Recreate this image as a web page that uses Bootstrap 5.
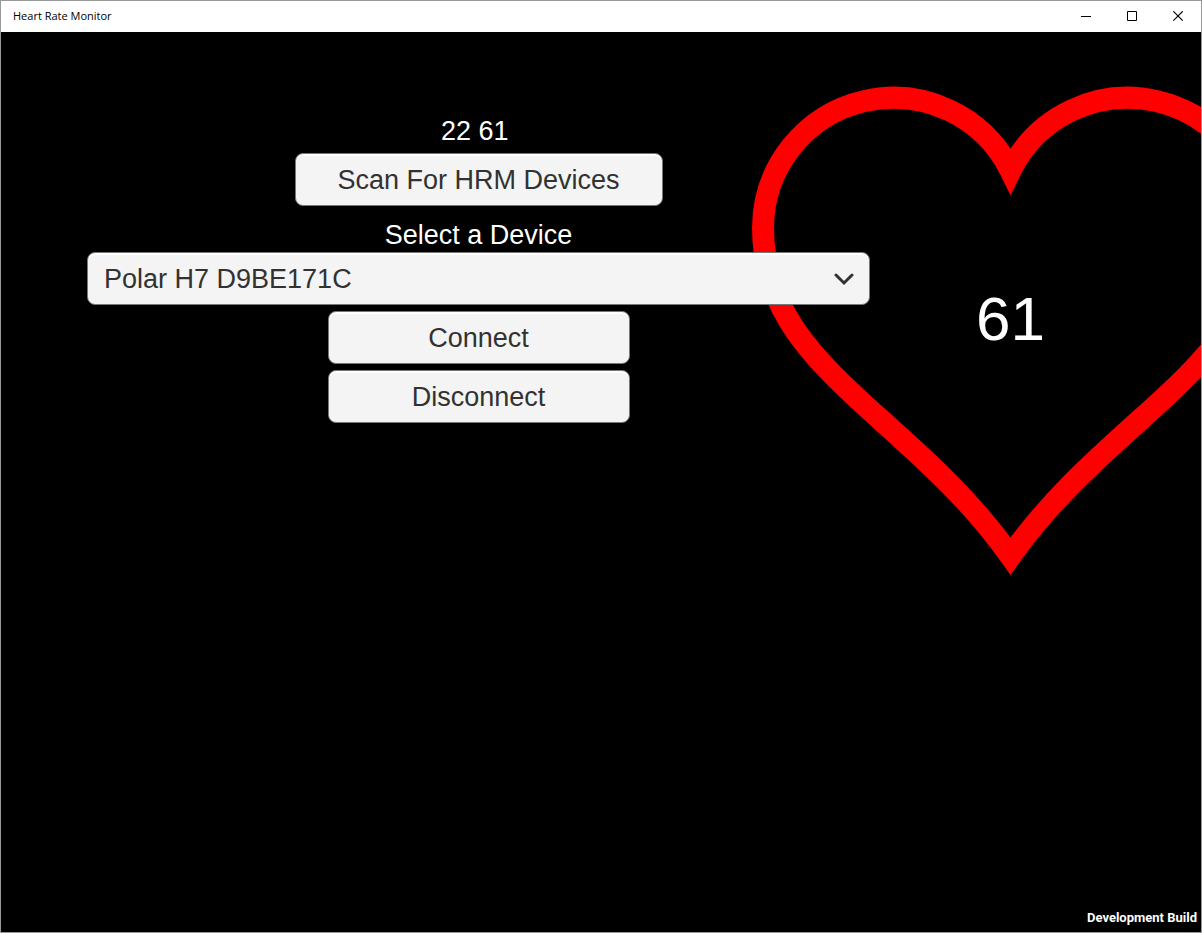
<!DOCTYPE html>
<html lang="en">
<head>
<meta charset="utf-8">
<meta name="viewport" content="width=device-width, initial-scale=1">
<title>Heart Rate Monitor</title>
<link href="https://cdn.jsdelivr.net/npm/bootstrap@5.3.0/dist/css/bootstrap.min.css" rel="stylesheet">
<style>
  body { font-family: "Liberation Sans", Arial, sans-serif; background: #000; }
  .app-window { border: 1px solid #999; }
  .title-bar { height: 31px; padding-left: 12px; }
  .title-bar h1 { font-size: 11px; line-height: 30px; font-family: "Open Sans", sans-serif; }
  .caption-btn { width: 46px; color: #000; }
  .caption-btn svg { display: block; }
  .stage { padding: 84px 331px 0 86px; font-size: 27px; line-height: 30px; }
  .controls { z-index: 1; }
  .status-line { margin-bottom: 7px; }
  .device-label { margin: 14px 0 2px; }
  .unity-control { height: 53px; border: 1px solid #777; border-radius: 8px; background-color: #f4f4f4; color: #323232; font-size: 27px; line-height: 30px; box-shadow: inset 0 2px 0 #fff; }
  .unity-control:hover, .unity-control:focus { background-color: #fff; color: #323232; border-color: #777; }
  .btn-scan { width: 368px; }
  .btn-link-state { width: 302px; margin-top: 6px; }
  select.unity-control { padding: 0 48px 0 16px; background-image: none; }
  .chevron { right: 16px; pointer-events: none; }
  .heart { top: 53px; right: -69px; width: 519px; height: 491px; }
  .heart-rate { font-size: 62px; line-height: 64px; margin-bottom: 24px; }
  .build-tag { font-family: Roboto, sans-serif; font-size: 13px; line-height: 16px; font-weight: 700; padding: 0 4px 6px; }
</style>
</head>
<body>
<div class="app-window d-flex flex-column min-vh-100 overflow-hidden">
  <header class="title-bar d-flex justify-content-between bg-white text-black">
    <h1 class="m-0 fw-normal">Heart Rate Monitor</h1>
    <div class="d-flex">
      <button type="button" class="caption-btn btn p-0 border-0 rounded-0 d-flex align-items-center justify-content-center" aria-label="Minimize">
        <svg width="11" height="11" fill="none" stroke="currentColor"><path d="M0 5.5h10"/></svg>
      </button>
      <button type="button" class="caption-btn btn p-0 border-0 rounded-0 d-flex align-items-center justify-content-center" aria-label="Maximize">
        <svg width="11" height="11" fill="none" stroke="currentColor"><path d="M.5 .5h9v9h-9z"/></svg>
      </button>
      <button type="button" class="caption-btn btn p-0 border-0 rounded-0 d-flex align-items-center justify-content-center" aria-label="Close">
        <svg width="11" height="11" fill="none" stroke="currentColor" stroke-width="1.2"><path d="M.3 .3l9.400 9.400M9.700 .3l-9.400 9.400"/></svg>
      </button>
    </div>
  </header>

  <main class="stage position-relative flex-grow-1 text-white">
    <div class="heart position-absolute d-flex align-items-center justify-content-center">
      <svg class="position-absolute top-0 start-0" width="519" height="491" viewBox="0 0 519 491" fill="none" stroke="#f00" stroke-width="22" stroke-miterlimit="8" aria-hidden="true">
        <path d="M259.500 85.500A130.500 130.500 0 0 0 12 142.500C12 225 61 273 130 335C179 379 221 417 259.500 471C298 417 340 379 389 335C458 273 507 225 507 142.500A130.500 130.500 0 0 0 259.500 85.500Z"/>
      </svg>
      <div class="heart-rate position-relative">61</div>
    </div>

    <form class="controls position-relative d-flex flex-column align-items-center">
      <div class="status-line">22 61&nbsp;</div>
      <button type="button" class="btn unity-control btn-scan p-0">Scan For HRM Devices</button>
      <label class="device-label" for="device">Select a Device</label>
      <div class="position-relative w-100 d-flex align-items-center">
        <select id="device" class="form-select unity-control">
          <option>Polar H7 D9BE171C</option>
        </select>
        <svg class="chevron position-absolute" width="20" height="14" viewBox="0 0 20 14" fill="none" stroke="#323232" stroke-width="3" stroke-linecap="round" aria-hidden="true"><path d="M2 3L10 11L18 3"/></svg>
      </div>
      <button type="button" class="btn unity-control btn-link-state p-0">Connect</button>
      <button type="button" class="btn unity-control btn-link-state p-0">Disconnect</button>
    </form>
  </main>

  <footer class="build-tag text-white text-end">Development Build</footer>
</div>
<script src="https://cdn.jsdelivr.net/npm/bootstrap@5.3.0/dist/js/bootstrap.bundle.min.js"></script>
</body>
</html>
